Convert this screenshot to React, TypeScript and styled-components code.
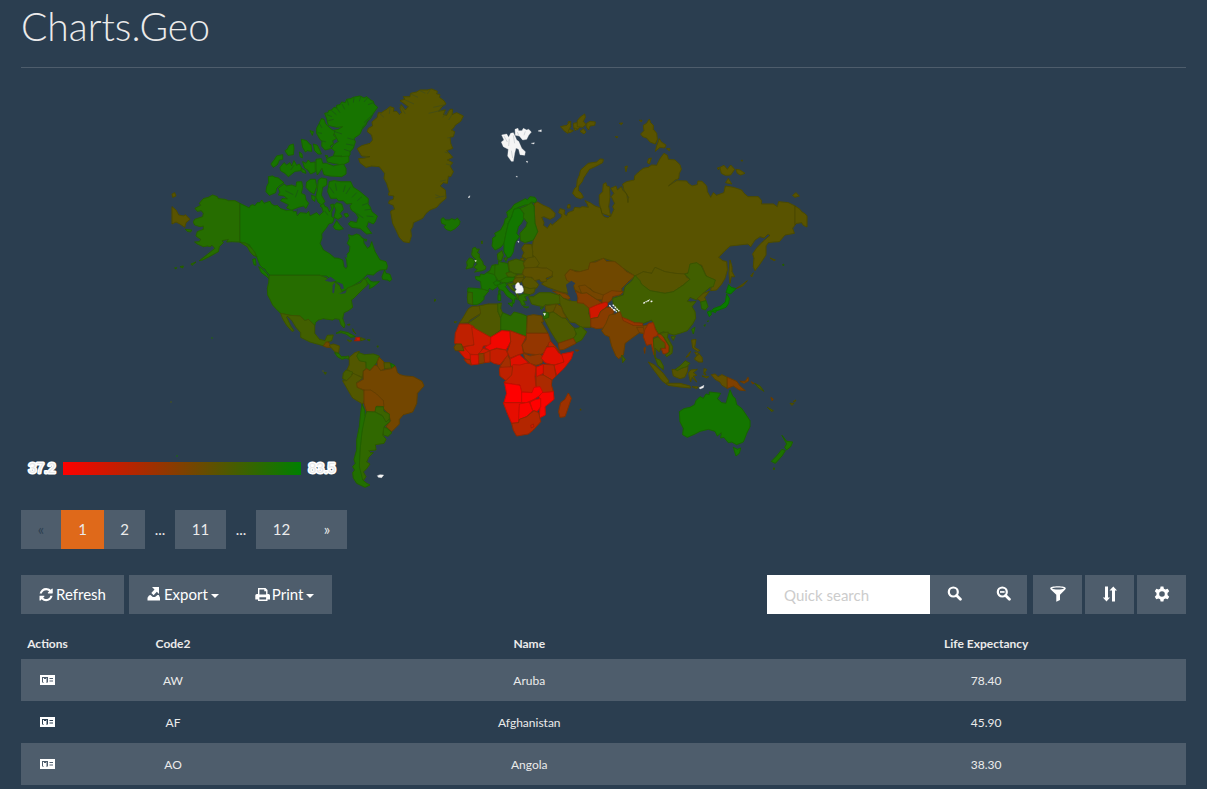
import React from "react";
import styled, { createGlobalStyle } from "styled-components";

const GlobalStyle = createGlobalStyle`
  * { box-sizing: border-box; }
  body {
    margin: 0;
    background: #2b3e50;
    color: #ebebeb;
    font-family: Lato, "Open Sans", sans-serif;
    font-size: 15px;
    line-height: 21px;
  }
`;

/* ---------- map data ---------- */

type Shape = [score: number, points: string];
type Region = { x: number; y: number; shapes: Shape[] };

const WHITE = -1;

// Each region has its own origin; points are in thirds of a pixel from it.
const regions: Region[] = [
  {
    x: 160,
    y: 80,
    shapes: [
      [0.91, "239,370 252,376 268,384 272,376 280,374 284,378 292,368 300,368 305,360 312,370 330,364 334,372 345,378 352,376 362,386 380,392 398,390 400,396 408,394 412,408 420,398 440,400 446,394 450,408 470,398 478,406 490,396 486,382 480,378 490,370 495,380 502,382 508,396 515,386 512,374 520,372 520,384 515,396 515,410 522,415 518,428 506,432 500,442 485,462 486,474 480,490 490,510 510,522 524,534 535,535 548,540 552,560 558,566 562,560 560,540 555,530 568,515 570,500 562,490 568,476 566,464 576,468 590,462 600,466 606,474 610,475 612,490 622,505 630,500 635,485 640,500 645,515 655,532 660,540 678,545 682,558 680,568 660,570 650,576 640,585 622,583 605,600 590,610 565,625 545,635 540,610 515,600 500,588 478,586 330,586 320,575 314,566 308,564 300,555 290,530 275,505 268,494 258,490 239,486"],
      [0.91, "666,590 674,570 678,580 690,583 695,598 690,604 682,600 668,598"],
      [0.91, "614,600 622,592 632,604 640,606 658,605 640,620 628,626 630,616"],
      [0.91, "494,100 504,98 506,92 515,90 522,82 530,84 530,76 540,74 545,66 556,68 560,58 572,56 580,52 600,48 612,54 620,50 632,60 640,64 642,72 653,82 640,100 632,115 622,124 618,135 606,148 600,162 582,175 586,185 580,205 570,215 570,224 562,235 562,240 545,228 520,228 525,215 515,205 520,195 535,185 525,165 518,152 535,148 548,140 530,142 505,136 500,115"],
      [0.91, "484,116 492,118 496,130 505,140 512,146 525,155 520,165 530,175 518,182 520,192 510,198 515,205 495,210 485,198 486,185 478,175 470,160 470,145 478,130"],
      [0.91, "500,236 520,228 545,230 566,228 567,245 548,255 520,250 502,246"],
      [0.91, "468,238 484,236 488,250 500,250 520,258 550,252 558,265 558,282 545,290 510,288 492,284 486,265 472,285 468,265"],
      [0.91, "325,290 338,288 345,292 355,294 372,308 360,316 350,325 347,338 328,346 318,335 320,320 326,308"],
      [0.91, "355,325 372,312 380,318 395,315 408,320 410,306 425,305 428,320 424,340 435,345 438,360 446,370 438,385 430,378 415,382 395,390 380,384 386,374 362,362 366,356 382,356 372,348 355,345 360,336"],
      [0.91, "360,262 372,248 380,255 390,248 395,258 402,242 410,256 418,252 424,262 422,272 405,274 385,290 375,280 362,272"],
      [0.91, "333,252 344,238 350,228 368,224 368,238 358,240 352,254 340,262"],
      [0.91, "382,208 388,196 400,192 402,205 400,224 384,226 375,212"],
      [0.91, "424,178 440,182 448,192 453,194 455,214 442,212 436,216 428,202"],
      [0.91, "460,192 472,196 480,212 484,222 474,222 464,212"],
      [0.91, "450,152 460,155 457,166"],
      [0.91, "418,216 426,222 427,234 420,230"],
      [0.91, "428,245 438,250 445,240 452,248 465,246 466,275 452,282 444,270 434,264"],
      [0.91, "424,264 436,272 438,280 426,276"],
      [0.91, "440,306 452,298 466,298 470,320 462,342 450,335 438,322"],
      [0.91, "475,300 484,294 500,297 500,315 488,322 484,345 495,365 484,374 474,366 468,350 472,330"],
      [0.91, "455,345 466,350 464,364 456,358"],
      [0.91, "496,226 504,228 500,234"],
      [0.91, "508,305 522,302 540,305 572,305 580,322 600,335 625,356 624,372 630,380 636,396 652,408 646,424 640,432 625,425 620,440 635,460 620,462 600,445 575,442 565,432 572,424 590,428 595,412 588,400 574,390 570,378 576,370 560,372 550,362 535,362 530,355 512,355 503,335"],
      [0.91, "520,440 530,422 540,436 550,446 538,450 526,448"],
      [0.91, "530,368 545,372 550,388 540,400 546,410 534,418 522,412 528,390 522,376"],
      [0.91, "552,402 562,400 566,408 558,412"],
      [0.91, "612,478 620,478 618,484"],
      [0.91, "278,538 286,536 288,556 282,554"],
      [0.91, "296,560 306,566 322,582 328,598 318,588 304,578"],
      [0.85, "239,370 225,362 205,362 195,358 175,356 172,350 158,345 145,352 130,356 118,370 122,376 105,385 112,394 124,392 130,400 128,410 104,418 100,426 104,435 120,440 130,438 130,448 112,455 108,468 122,478 118,485 104,486 112,492 130,500 142,498 152,500 155,495 165,505 140,525 118,542 128,540 148,530 175,515 178,500 190,488 186,482 205,478 200,486 215,485 239,486"],
      [0.85, "239,486 258,490 275,505 284,516 290,530 280,526 270,515 262,500"],
      [0.85, "93,552 108,546 96,556"],
      [0.85, "76,448 95,450 92,456 82,454"],
      [0.85, "60,560 70,558 68,564"],
      [0.85, "44,564 50,563 48,567"],
      [0.65, "36,380 48,390 56,405 72,408 76,404 90,418 78,428 74,442 60,432 48,426 36,432"],
      [0.65, "36,342 44,338 48,348 38,352"],
    ],
  },
  {
    x: 340,
    y: 80,
    shapes: [
      [0.66, "52,206 65,197 90,190 98,180 95,165 82,155 85,145 98,138 96,126 112,112 115,98 124,98 140,88 150,80 162,84 160,94 170,94 178,104 185,98 180,84 184,74 196,90 205,80 186,66 180,62 195,58 190,50 210,50 212,40 230,36 240,30 262,30 275,27 292,34 290,42 300,44 298,52 312,62 318,72 306,80 296,94 316,90 310,104 320,106 330,88 338,88 336,104 350,98 370,108 362,124 346,135 340,145 334,150 344,155 340,170 330,172 332,190 338,205 320,212 328,220 338,232 322,240 338,248 330,258 340,275 332,290 325,288 322,310 310,308 300,318 316,330 318,355 300,370 290,382 270,390 258,400 248,415 220,428 218,440 212,450 214,468 208,488 190,485 178,472 168,450 158,430 152,395 154,392 164,388 160,376 146,370 148,362 160,358 162,348 145,345 148,335 140,310 132,295 134,280 118,260 95,258 78,262 60,248 56,236 75,234 90,230 65,228 60,220"],
      [WHITE, "485,165 500,162 506,172 512,160 520,158 526,170 530,180 536,184 545,205 556,215 554,226 540,224 536,208 528,204 524,220 520,244 514,244 503,228 505,208 490,200 484,186 492,180"],
      [WHITE, "525,148 534,145 536,152 546,152 550,145 560,150 566,148 574,156 566,166 560,178 548,180 538,168 526,166"],
      [WHITE, "594,153 604,149 604,155"],
      [WHITE, "574,190 583,188 582,192"],
      [WHITE, "558,244 563,244 562,248"],
      [WHITE, "528,289 532,289 531,292"],
      [WHITE, "384,352 390,347 388,353"],
      [0.9, "303,418 310,413 316,420 328,420 335,416 345,420 352,414 360,424 358,434 345,446 332,453 318,448 312,440 318,435 305,430"],
      [0.65, "663,140 680,138 688,148 700,152 690,158 674,152"],
      [0.65, "684,126 690,124 692,134 686,136"],
      [0.65, "700,130 712,128 720,140 712,150 702,146"],
    ],
  },
  {
    x: 540,
    y: 80,
    shapes: [
      [0.65, "-17,370 -8,366 10,376 30,385 45,400 44,410 30,418 12,410 5,412 12,428 10,436 22,445 32,430 36,436 50,424 64,412 66,404 56,398 60,386 74,390 72,402 80,408 84,398 100,392 104,382 120,384 126,380 145,382 142,372 135,362 150,368 165,378 182,384 186,402 192,410 204,414 210,408 186,400 178,370 178,345 188,335 190,312 198,308 200,318 208,320 210,350 206,380 212,410 222,388 218,380 224,370 214,350 222,340 212,325 228,318 232,330 244,320 248,330 260,342 264,368 266,352 252,330 248,312 260,305 283,300 284,288 296,276 310,265 325,262 335,255 350,256 360,236 372,220 382,226 385,238 405,240 420,254 424,268 418,280 416,296 405,300 385,318 410,302 440,303 445,310 456,318 472,314 474,303 486,304 500,318 502,335 512,352 520,338 530,346 552,338 556,318 580,322 605,330 612,340 624,350 655,350 665,362 664,372 700,372 712,380 716,365 745,368 765,378 765,435 758,445 763,460 735,465 718,485 700,486 685,488 678,498 678,525 668,540 658,555 645,572 640,560 642,535 638,522 650,504 668,485 690,466 684,462 672,474 660,470 645,480 632,500 624,492 570,498 555,512 536,532 548,542 560,545 562,570 555,595 545,612 530,630 512,632 516,612 526,600 500,590 485,555 460,552 450,575 435,582 405,580 375,575 345,562 335,580 310,575 285,588 250,565 225,545 190,535 150,548 145,568 120,575 90,568 75,585 80,600 94,608 80,616 85,640 60,635 20,620 5,612 20,600 38,590 36,578 15,570 -5,562 -12,550 -15,535 -25,520 -22,495 -20,480 -7,455 -15,430 -17,395"],
      [0.65, "765,378 780,388 785,395 796,402 801,408 801,441 790,436 785,428 770,430 765,435"],
      [0.65, "570,540 576,560 576,575 584,590 574,590 570,610 567,580"],
      [0.65, "98,340 104,325 110,320 112,300 118,286 122,270 138,256 145,250 170,246 180,237 190,238 188,248 165,260 148,268 140,280 132,292 126,306 116,318 115,332 124,340 130,352 122,356 108,352"],
      [0.65, "310,136 320,130 328,117 332,128 340,136 340,148 350,160 352,178 346,192 330,186 320,174 308,170 302,162 312,152"],
      [0.65, "346,214 350,198 358,176 364,186 378,195 374,204 360,202"],
      [0.65, "380,206 390,206 388,212"],
      [0.65, "298,121 306,121 304,125"],
      [0.65, "62,140 80,136 92,124 92,140 86,150 84,160 74,154"],
      [0.65, "112,122 120,112 134,102 136,112 130,124 138,134 128,142 112,140"],
      [0.65, "140,130 150,124 166,126 164,136 150,138 146,150 140,142"],
      [0.65, "102,144 112,146 106,152"],
      [0.65, "120,154 130,146 138,156 132,162"],
      [0.65, "238,130 248,129 244,134"],
      [0.65, "226,170 233,170 231,174"],
      [0.65, "255,260 262,258 258,275"],
      [0.65, "84,374 90,374 90,384 82,384"],
      [0.65, "326,236 334,234 328,252 322,248"],
      [0.65, "540,262 552,256 562,268 572,255 584,268 572,285 556,286 544,280"],
      [0.65, "588,268 600,270 615,280 602,285 592,280"],
      [0.65, "557,308 565,295 575,312"],
      [0.65, "532,264 538,262 536,270"],
      [0.65, "758,346 768,338 778,348 764,352"],
      [0.65, "603,241 608,241 606,244"],
      [0.65, "690,534 706,540 702,542"],
      [0.65, "588,626 606,614 622,602 608,618"],
      [0.65, "632,588 640,578 636,590"],
      [0.56, "75,585 90,568 108,575 120,575 145,568 150,548 168,546 190,535 200,544 225,545 250,565 258,574 285,588 265,605 245,625 246,634 210,638 185,652 176,648 150,625 125,618 122,640 105,630 100,614 80,600"],
      [0.66, "285,588 310,575 335,580 345,562 375,575 405,580 435,582 440,592 450,598 430,615 400,635 375,640 330,632 300,612"],
      [0.8, "728,554 731,553 731,557"],
    ],
  },
  {
    x: 440,
    y: 180,
    shapes: [
      [0.65, "242,236 250,234 254,242 244,242"],
      [0.9, "158,185 158,174 168,168 164,160 182,150 192,132 196,116 204,112 200,96 214,86 222,74 245,62 256,56 262,60 270,50 285,52 290,60 286,68 275,66 265,74 255,75 235,82 222,88 215,110 205,130 198,160 192,190 182,202 165,210 156,198"],
      [0.93, "222,88 238,84 250,98 252,114 244,130 235,140 230,160 238,170 226,186 222,200 220,215 212,230 203,234 192,215 192,190 198,160 205,130 215,110"],
      [0.85, "240,85 258,78 275,68 283,80 283,95 285,130 293,155 280,180 255,188 242,182 240,160 258,140 262,128 250,112 252,100"],
      [0.84, "172,222 186,212 190,225 184,242 174,240"],
      [0.84, "192,234 202,234 198,244"],
      [0.86, "98,205 106,202 110,208 118,207 112,218 118,222 118,232 128,245 130,254 138,260 136,268 126,272 104,276 112,268 102,262 112,252 105,244 108,238 100,232 95,224"],
      [0.86, "80,246 88,234 98,236 104,244 98,262 78,267 82,256"],
      [0.8, "124,184 127,183 126,192"],
      [0.9, "106,290 120,290 122,282 132,284 145,275 155,274 168,290 170,305 172,320 158,330 148,325 144,332 130,330 124,325 122,305 108,298"],
      [0.89, "84,324 105,325 130,328 146,333 132,350 132,358 120,370 110,374 98,374 97,338 83,336"],
      [0.8, "84,336 97,338 98,374 84,370 82,352"],
      [0.87, "142,278 150,272 156,256 168,254 166,285 158,282"],
      [0.86, "165,255 175,254 176,244 188,248 203,250 208,275 198,280 205,292 200,300 175,303 164,285"],
      [0.75, "205,245 228,237 250,244 255,270 245,282 222,280 208,272"],
      [0.76, "198,280 212,276 232,285 218,293 205,291"],
      [0.87, "178,303 198,292 225,292 220,303 200,309 185,307"],
      [0.91, "160,308 170,302 182,306 178,314 165,316"],
      [0.9, "172,316 182,312 195,308 200,316 196,320 208,336 225,348 232,358 224,356 222,370 216,370 218,360 200,347 190,332 178,328"],
      [0.9, "204,370 218,369 216,380"],
      [0.9, "174,344 182,344 182,362 174,361"],
      [0.9, "176,332 180,332 180,342 176,341"],
      [0.68, "232,285 250,284 252,292 236,294 225,292"],
      [0.66, "220,303 226,294 252,292 246,304 230,312 220,309"],
      [0.76, "202,312 218,309 228,312 214,316 222,328 232,338 214,328"],
      [0.66, "246,304 258,290 272,292 284,300 296,314 290,324 270,326 252,320"],
      [0.68, "252,320 270,326 286,324 282,338 268,344 252,340"],
      [0.84, "236,348 250,342 270,344 254,350 260,362 250,362 256,374 246,376 240,362 234,358"],
      [0.84, "250,380 266,381 260,384"],
      [0.77, "228,338 234,342 236,356 230,350"],
      [WHITE, "227,314 232,308 237,308 240,316 246,317 250,326 250,334 244,339 228,340 226,334 230,328 226,324"],
      [0.66, "245,205 254,192 275,194 278,214 278,235 262,238 246,230 252,218"],
      [0.65, "250,250 262,234 285,230 298,250 290,262 255,264"],
      [0.63, "250,270 255,264 290,262 306,264 320,264 338,275 336,288 318,294 320,304 304,306 298,298 284,302 276,292 255,290 248,282"],
      [WHITE, "233,184 237,184 236,188"],
      [WHITE, "104,242 109,241 108,245"],
    ],
  },
  {
    x: 430,
    y: 230,
    shapes: [
      [0.74, "296,200 310,200 328,188 360,188 385,195 398,205 396,220 380,222 345,224 340,230 320,226 305,222"],
      [0.53, "368,183 384,186 408,192 424,204 414,208 398,204 390,196"],
      [0.69, "388,192 400,205 418,212 440,212 460,216 478,230 476,250 484,270 482,292 455,292 435,278 420,276 400,245 390,220"],
      [0.48, "436,184 452,190 470,188 500,208 516,218 500,225 478,235 460,220 442,218 444,204"],
      [0.54, "446,168 465,165 490,185 520,195 530,195 515,210 500,208 470,188 455,190"],
      [0.5, "515,215 520,195 545,182 580,185 572,194 548,200 545,210 528,222"],
      [0.18, "478,235 500,225 515,220 530,216 533,225 528,232 512,244 504,262 482,266"],
      [0.47, "482,266 504,262 512,244 530,232 545,232 552,246 540,265 530,280 536,292 500,296 482,290"],
      [0.65, "345,228 380,222 370,245 350,250"],
      [0.62, "370,245 380,222 394,230 400,248 410,264 395,264"],
      [0.7, "342,266 356,262 360,248 370,246 396,264 408,266 420,282 430,292 440,298 436,318 430,324 385,340 375,325 360,300"],
      [0.76, "432,296 446,294 452,288 470,306 455,330 435,340 430,325 440,312"],
      [0.48, "385,340 430,325 438,340 402,358 388,360"],
      [0.84, "340,246 355,248 356,262 342,267"],
      [WHITE, "340,250 347,250 344,257"],
      [0.45, "436,360 446,361 440,364"],
      [0.83, "330,234 340,232 334,238"],
      [0.69, "148,228 175,222 204,222 204,245 212,265 212,300 182,322 165,322 125,290 115,280 150,255"],
      [0.66, "100,262 115,236 125,230 148,228 152,250 120,270 115,278 88,280"],
      [0.76, "203,222 214,219 212,235 218,250 212,264 204,245"],
      [0.83, "218,248 242,258 252,246 275,252 290,258 290,320 240,302 212,300 212,264"],
      [0.58, "292,258 310,254 336,258 340,276 334,276 354,310 290,310"],
      [0.25, "88,282 116,282 132,290 132,345 100,350 74,340 76,310"],
      [0.2, "125,290 182,322 180,345 160,348 150,375 112,372 104,350 132,345"],
      [0.05, "182,322 215,302 240,304 242,335 228,360 200,354 180,362 164,352 182,342"],
      [0.28, "240,302 288,320 276,345 280,370 265,374 240,385 232,366 242,335"],
      [0.42, "290,310 354,310 362,334 350,350 342,368 330,375 300,372 282,368 276,345 288,330"],
      [0.42, "280,370 300,378 330,372 342,382 336,400 318,406 300,400 284,384"],
      [0.12, "350,352 372,348 385,368 395,375 412,378 400,398 370,405 345,398 334,385"],
      [0.3, "356,338 362,334 378,352 390,368 372,350 354,350"],
      [0.12, "395,372 430,365 424,386 402,415 380,436 372,406 402,396"],
      [0.26, "340,403 372,405 378,438 366,450 340,435"],
      [0.33, "318,435 340,435 366,450 364,465 370,485 340,488 318,470"],
      [0.12, "318,412 340,403 340,430 320,440"],
      [0.22, "242,408 250,402 280,400 300,400 318,410 315,440 318,470 312,488 275,486 270,465 245,462 222,458 228,450 240,434"],
      [0.12, "238,388 268,374 295,398 270,405 250,404 242,410"],
      [0.36, "210,410 232,375 240,388 242,412 222,414"],
      [0.23, "178,362 200,356 228,360 234,374 210,404 192,400 178,392"],
      [0.26, "208,420 210,412 248,410 245,435 228,452 210,438"],
      [0.2, "142,376 160,355 180,362 172,372 150,378"],
      [0.47, "145,372 162,370 164,398 146,402"],
      [0.28, "162,370 180,362 180,396 164,398"],
      [0.15, "120,374 145,374 146,402 122,405"],
      [0.17, "86,362 102,352 120,372 122,392 106,386"],
      [0.32, "102,388 120,388 124,404 112,400"],
      [0.58, "72,352 78,342 94,342 102,362 76,362"],
      [0, "224,460 245,462 270,466 275,486 275,518 222,518 230,490"],
      [0, "275,486 306,488 312,472 330,470 340,490 312,508 290,518 275,518"],
      [0.03, "336,488 370,485 372,508 345,530 346,555 328,564 330,530 332,510 326,500"],
      [0, "300,516 318,508 332,506 332,530 322,544 308,542"],
      [0.1, "220,518 285,518 268,530 266,578 245,580 232,550"],
      [0.02, "268,522 298,516 308,542 290,560 266,570"],
      [0.3, "245,580 266,578 268,568 290,560 312,542 326,548 332,575 310,600 295,612 260,618 250,600"],
      [0.2, "302,586 310,582 312,590 304,594"],
      [0.38, "386,545 392,518 405,508 415,489 424,505 405,560 390,562"],
      [0.82, "14,208 18,210 15,213"],
      [0.7, "72,276 80,275 76,279"],
      [0.64, "450,538 453,537 452,541"],
    ],
  },
  {
    x: 600,
    y: 240,
    shapes: [
      [0.745, "105,106 120,122 124,132 150,152 195,160 220,155 250,135 270,118 254,102 264,100 270,72 290,68 304,78 318,108 346,120 340,140 330,142 300,168 290,180 270,172 262,184 272,186 288,184 276,200 285,215 287,235 278,252 262,272 245,278 222,285 205,280 190,275 175,282 165,262 155,240 130,250 100,248 68,235 50,212 40,192 38,175 70,165 75,140 96,122"],
      [0.66, "292,176 310,160 328,154 314,172 318,182 304,186"],
      [0.83, "302,186 318,182 324,200 316,210 305,206"],
      [0.97, "386,134 394,142 408,146 392,162 378,158"],
      [0.97, "380,162 388,175 386,190 378,202 362,208 345,214 332,216 340,206 362,198 376,186"],
      [0.97, "322,216 332,212 334,224 328,230"],
      [0.97, "338,214 350,210 346,218"],
      [0.85, "275,268 285,262 280,282"],
      [0.74, "213,290 226,288 220,301"],
      [0.52, "28,225 46,222 60,215 70,240 100,256 118,248 130,258 148,254 138,266 130,280 118,278 95,295 75,310 70,345 56,356 48,348 35,318 28,290 15,285 5,272 18,250"],
      [0.41, "66,232 82,238 104,248 128,250 128,257 100,256 70,242"],
      [0.5, "110,262 130,262 134,280 118,278"],
      [0.74, "65,345 76,358 68,368"],
      [0.46, "132,325 136,322 134,340"],
      [0.38, "134,270 146,250 160,248 166,268 176,285 160,292 160,304 166,345 162,345 154,312 140,316 130,290"],
      [0.7, "160,296 175,290 188,302 198,308 194,326 182,325 178,336 166,325 166,350 174,362 164,352"],
      [0.4, "172,284 186,282 195,300 208,320 206,338 190,342 184,326 197,325 195,308 184,300"],
      [0.73, "180,280 205,276 202,292 218,320 216,340 200,350 196,345 208,336 208,318 192,292"],
      [0.74, "166,355 180,360 190,378 190,389 174,376"],
      [0.66, "145,366 162,374 188,398 206,422 202,434 186,422 160,388"],
      [0.66, "198,430 240,430 270,438 272,444 240,441 204,436"],
      [0.66, "276,440 295,441 290,446"],
      [0.66, "216,388 230,390 248,384 264,378 262,395 254,412 240,416 220,408"],
      [0.74, "226,388 240,378 256,362 270,370 260,380 246,384 232,392"],
      [0.66, "266,398 272,390 292,388 280,398 290,406 280,408 290,426 276,412 272,426 268,412"],
      [0.66, "312,386 320,388 314,398 318,404 312,402"],
      [0.66, "306,408 326,410 320,414"],
      [0.65, "275,300 288,298 284,322 300,332 292,334 278,324"],
      [0.65, "286,352 298,342 306,352 308,366 296,366 284,358"],
      [0.65, "258,352 272,334 266,348"],
      [0.65, "284,336 296,340 290,346"],
      [0.62, "334,404 346,402 354,410 366,404 382,412 382,445 366,436 360,426 345,418"],
      [0.5, "382,412 410,424 420,438 436,452 418,450 400,438 382,445"],
      [0.5, "420,424 436,424 444,412 446,422 432,430"],
      [0.5, "454,425 462,430 458,432"],
      [0.73, "464,430 480,438 492,454 476,444"],
      [0.7, "502,502 520,512 514,514"],
      [0.5, "513,472 520,478 516,482"],
      [0.66, "570,490 582,490 576,496"],
      [0.66, "580,484 588,480 584,486"],
      [WHITE, "298,443 312,436 310,443 300,447"],
      [0.92, "238,515 252,506 270,502 284,494 288,482 300,470 310,475 318,462 328,464 328,456 345,458 362,460 352,476 365,488 378,490 384,470 390,450 398,468 406,476 410,494 425,505 438,524 450,542 450,560 440,580 430,606 410,614 395,606 385,608 372,592 362,594 364,578 352,588 345,574 325,568 300,574 285,582 262,592 248,584 250,565 240,545"],
      [0.92, "400,622 412,628 422,624 418,640 408,648"],
      [0.89, "546,586 560,604 578,606 572,620 560,630 554,622 560,612"],
      [0.89, "546,628 556,632 546,648 526,670 514,664 530,648"],
      [0.8, "520,684 524,684 522,690"],
      [0.85, "548,74 551,73 550,77"],
      [0.85, "312,256 316,254 314,259"],
      [0.85, "322,244 325,242 324,246"],
    ],
  },
  {
    x: 240,
    y: 250,
    shapes: [
      [0.85, "88,76 240,76 260,84 274,92 288,98 300,108 306,126 318,122 322,114 345,105 362,98 372,86 380,92 382,105 368,118 356,130 340,146 334,150 336,162 338,172 325,182 312,188 308,205 315,225 312,234 303,224 298,208 285,206 278,210 250,206 235,210 226,218 225,226 215,220 205,208 195,212 180,198 150,196 122,190 108,176 98,165 90,148 83,135 82,115 86,98"],
      [0.74, "122,190 150,196 180,198 195,212 205,208 224,226 224,250 238,268 255,272 262,256 280,255 275,272 262,276 252,288 235,283 210,276 182,262 182,248 168,232 156,212 142,198 140,202 152,228 162,242 156,244 140,226 128,206"],
      [0.57, "250,288 258,276 266,276 272,292 260,292"],
      [0.67, "268,286 280,282 298,288 296,308 286,306 276,296"],
      [0.86, "284,308 296,310 304,320 316,320 326,318 326,328 318,324 306,328 292,320"],
      [0.86, "288,250 302,243 324,248 346,260 332,262 318,252 304,248"],
      [0.2, "346,264 360,262 360,272 342,272 350,268"],
      [0.72, "362,263 376,268 362,272"],
      [0.82, "382,269 390,269 388,273"],
      [0.74, "322,270 335,272 330,276"],
      [0.8, "322,224 330,222 328,226"],
      [0.8, "338,236 342,244 348,252 340,244"],
      [0.8, "411,288 415,288 413,292"],
      [0.75, "252,367 259,368 256,373"],
      [0.68, "328,322 345,308 358,304 352,318 358,332 378,336 380,355 370,362 368,382 342,372 322,358 328,345"],
      [0.78, "356,308 374,314 400,312 418,318 412,335 402,348 390,362 378,355 378,336 358,332 350,318"],
      [0.56, "418,322 432,336 434,356 422,362 412,348 412,335"],
      [0.68, "432,338 450,338 454,354 434,356"],
      [0.9, "452,340 464,346 456,356"],
      [0.72, "310,370 318,360 338,366 334,378 320,392 308,386"],
      [0.68, "308,392 320,392 334,378 340,370 368,384 350,398 352,412 372,422 374,448 368,462 338,444 326,424"],
      [0.55, "370,364 380,356 390,362 404,346 412,348 422,362 454,356 466,348 472,368 480,374 495,378 520,380 546,394 552,408 532,430 530,460 518,486 490,494 478,508 478,522 455,545 438,530 452,512 445,490 430,475 430,452 400,430 372,420 352,412 350,400 370,388"],
      [0.53, "372,420 392,420 410,432 430,452 432,470 410,468 405,486 380,485 372,460"],
      [0.77, "408,470 430,470 432,484 448,492 448,508 438,516 424,504 426,496 405,486"],
      [0.82, "430,532 440,534 456,548 444,559 430,555"],
      [0.81, "380,485 405,486 428,498 438,516 448,508 450,514 432,530 428,555 438,568 432,580 406,584 408,600 386,602 392,608 400,608 386,622 380,636 390,642 380,656 370,666 378,680 370,692 355,670 358,630 362,580 368,520"],
      [0.87, "366,462 374,480 375,500 366,545 360,600 358,650 368,690 380,700 390,705 375,712 350,700 340,684 338,668 344,660 338,650 346,640 342,628 350,600 350,570 358,530 362,490"],
      [WHITE, "412,677 420,674 431,675 425,683 415,682"],
      [0.8, "582,152 586,150 585,154"],
    ],
  },
];

// Inland water, drawn over the land in the page colour.
const lakes = [
  "255,92 262,86 272,80 288,92 272,96",
  "278,106 284,98 286,102 282,130 277,128",
  "290,96 308,102 312,116 304,118 298,104",
  "296,132 320,120 316,130",
  "312,12 322,14 320,24 312,20",
];

const inlets =
  "M515,92l14,12M530,84l10,14M546,72l8,16M562,60l4,16M582,54l-2,14M602,50l-4,14M622,54l-10,12M640,68l-16,6M500,104l16,6M505,122l16,-4M636,106l-24,22M628,120l-22,24M522,154l24,8M584,180l-22,-6M580,196l-22,-4M570,214l-18,-6M376,332l24,12M414,330l-8,22M402,256l-10,14M508,320l14,20M526,310l4,22M556,316l-6,20M572,320l-14,22M590,338l-14,14M606,350l-14,12M622,370l-16,6M632,388l-18,2M640,410l-20,-2M590,400l20,14M494,392l10,14M410,402l2,-14M478,130l8,14M474,158l12,2M484,182l14,4";

const fillFor = (score: number) =>
  score === WHITE
    ? "#f5f5f5"
    : `rgb(${Math.round(255 * (1 - score))},${Math.round(128 * score)},0)`;

const MapSvg = styled.svg`
  display: block;
  width: 800px;
  max-width: 100%;
  font-family: "Liberation Sans", Arial, sans-serif;
  font-size: 14px;
`;

const WorldMap = () => (
  <MapSvg viewBox="21 80 800 420" role="img" aria-label="Life expectancy by country">
    <defs>
      <linearGradient id="scale">
        <stop offset="0" stopColor="#ff0000" />
        <stop offset="1" stopColor="#008000" />
      </linearGradient>
    </defs>
    {regions.map((region, i) => (
      <g key={i} transform={`translate(${region.x} ${region.y}) scale(0.33333)`}>
        {region.shapes.map(([score, points], n) => (
          <g key={n} strokeLinejoin="round">
            <polygon
              points={points}
              fill={fillFor(score)}
              stroke={fillFor(score)}
              strokeWidth={score === WHITE ? 1 : 3}
            />
            {score !== WHITE && (
              <polygon points={points} fill="none" stroke="#203000" strokeOpacity="0.24" strokeWidth="3" />
            )}
          </g>
        ))}
      </g>
    ))}
    <g transform="translate(160 80) scale(0.33333)">
      <path d={inlets} fill="none" stroke="#1d4a1c" strokeWidth="2.4" opacity="0.7" />
    </g>
    <g transform="translate(340 80) scale(0.33333)">
      <path
        d="M118,100l14,12M150,84l-2,18M178,72l18,30M196,60l26,12M212,42l22,10M240,32l16,8M270,30l-8,12M316,88l-50,12M316,74l-36,8M324,92l-16,20M336,104l-10,16M332,172l-10,2M328,220l-14,-4M334,256l-16,-4M318,300l-18,4M300,350l-14,-6M314,348l-28,6"
        fill="none"
        stroke="#3c4a20"
        strokeWidth="2.4"
        opacity="0.8"
      />
      <path
        d="M492,168l10,18M508,176l-2,22M520,166l4,24M514,212l4,22M532,156l4,10M556,154l-4,12"
        fill="none"
        stroke="#2b3e50"
        strokeWidth="1.500"
        opacity="0.35"
      />
    </g>
    <g transform="translate(240 250) scale(0.33333)" fill="#2b3e50">
      {lakes.map((points) => (
        <polygon key={points} points={points} />
      ))}
    </g>
    <g transform="translate(430 230) scale(0.33333)">
      <path
        d="M408,164L424,152L436,160L428,170L434,184L440,192L440,214L424,212L414,190Z"
        fill="#2b3e50"
      />
      <path
        d="M538,226l16,16M548,224l20,20M552,238l8,8M640,220l10,-6M652,214l8,-5M662,216l6,-4"
        stroke="#f0f0f0"
        strokeWidth="4"
        strokeDasharray="6 2"
        fill="none"
      />
    </g>
    <circle cx="171" cy="402" r="0.8" fill="#4d5a10" />
    <circle cx="212" cy="338" r="0.8" fill="#236b00" />
    <circle cx="323" cy="371" r="0.8" fill="#4d5a10" />
    <circle cx="177" cy="456" r="0.8" fill="#187500" />
    <rect x="63" y="462" width="238" height="13" fill="url(#scale)" />
    <g fill="#e8e8e8" stroke="#ffffff" strokeWidth="3" strokeLinejoin="round" textAnchor="middle">
      <text x="42" y="473" paintOrder="stroke">37.2</text>
      <text x="322" y="473" paintOrder="stroke">83.5</text>
    </g>
  </MapSvg>
);

/* ---------- icons ---------- */

const Glyph = styled.svg<{ $w?: number; $h?: number }>`
  width: ${(p) => p.$w ?? 15}px;
  height: ${(p) => p.$h ?? 15}px;
  fill: currentColor;
  flex: none;
`;

const RefreshIcon = () => (
  <Glyph viewBox="-60 -110 1740 1740">
    <path d="M1511 928q0 5-1 7-64 268-268 434.500T764 1536q-146 0-282.500-55T238 1324l-129 129q-19 19-45 19t-45-19-19-45V960q0-26 19-45t45-19h448q26 0 45 19t19 45-19 45l-137 137q71 66 161 102t187 36q134 0 250-65t186-179q11-17 53-117 8-23 30-23h192q13 0 22.500 9.500t9.500 22.500zm25-800v448q0 26-19 45t-45 19h-448q-26 0-45-19t-19-45 19-45l138-138Q969 256 768 256q-134 0-250 65T332 500q-11 17-53 117-8 23-30 23H50q-13 0-22.500-9.500T18 608v-7q65-268 270-434.500T768 0q146 0 284 55.500T1297 212l130-129q19-19 45-19t45 19 19 45z" />
  </Glyph>
);
const ExportIcon = () => (
  <Glyph viewBox="0 0 15 15">
    <path d="M5 0h7v7l-2.200-2.200-3.200 3.400-2.300-2.300 3.200-3.500zM2 8.500l1.500-.5 2.300 2H8l2.500-2h1.300l1.200 2.700V13.500H.5v-2.800z" />
  </Glyph>
);
const PrintIcon = () => (
  <Glyph viewBox="0 0 15 15">
    <path
      fillRule="evenodd"
      d="M3 1h7.500L12.500 3v4H13.500Q15 7 15 8.500V12.500h-2.500V14H3v-1.500H.3V8.500Q.3 7 1.800 7H3zM4.400 2.400V7.600h6.700V4.300H9.300V2.400zM4.400 10.300v2.300h6.700v-2.300z"
    />
  </Glyph>
);
const SearchIcon = ({ minus = false }: { minus?: boolean }) => (
  <Glyph viewBox="0 0 15 15">
    <circle cx="6.300" cy="6" r="4.500" fill="none" stroke="currentColor" strokeWidth="2.200" />
    <path d="M9.600 9.400l3.800 3.800" stroke="currentColor" strokeWidth="2.800" strokeLinecap="round" />
    {minus && <path d="M4 5.100h4.600v1.700H4z" />}
  </Glyph>
);
const FilterIcon = () => (
  <Glyph viewBox="0 0 16 16" $w={16} $h={16}>
    <path
      fillRule="evenodd"
      d="M.2 2.300C.2 1 3.500.300 8 .300s7.800.7 7.800 2c0 .6-.3 1-.8 1.500L10 8.800V14L6.300 15.800v-7L1 3.800C.5 3.300.2 2.900.2 2.300zM2 2.500c1 .7 3.200 1 6 1s5-.3 6-1c-1-.6-3.200-.9-6-.9s-5 .3-6 .9z"
    />
  </Glyph>
);
const SortIcon = () => (
  <Glyph viewBox="0 0 16 16" $w={16} $h={16}>
    <path d="M3 .6h3v10.900h2L4.500 15.400.8 11.500H3zM9.500 4.500h-2L11.300.6 15 4.500h-2v10.900h-3V4.500z" />
  </Glyph>
);
const GearIcon = () => (
  <Glyph viewBox="0 0 16 16" $w={16} $h={16}>
    <path
      fillRule="evenodd"
      d="M6.600.5h2.800l.5 2.200 1.600.9 2.200-.8 1.500 2.500-1.700 1.600v2.200l1.700 1.600-1.500 2.500-2.200-.8-1.600.9-.5 2.200H6.600l-.5-2.200-1.600-.9-2.200.8-1.500-2.500 1.700-1.600V6.900L.8 5.300l1.500-2.500 2.200.8 1.600-.9zM8 5.200a2.800 2.800 0 1 0 0 5.600 2.800 2.800 0 0 0 0-5.600z"
    />
  </Glyph>
);
const CardIcon = () => (
  <Glyph viewBox="0 0 15 10" $w={15} $h={10}>
    <path
      fillRule="evenodd"
      d="M0 0h15v10H0zM2 2v5.500h2V7H3V3h1v1h2V3h.500v4H6v.5h2V2zM9.500 3v1H13V3zM9.500 5.500v1H13v-1z"
    />
  </Glyph>
);

/* ---------- page ---------- */

const Page = styled.main`
  padding: 0 21px 4px;
`;
const Title = styled.h1`
  margin: 0 0 12px;
  padding: 3px 0 18px;
  border-bottom: 1px solid #4e5d6c;
  font-size: 39px;
  font-weight: 300;
  line-height: 46px;
`;
const Pagination = styled.nav`
  display: flex;
  margin: 10px 0 26px;
`;
const PageButton = styled.button<{ $active?: boolean; $width: number }>`
  width: ${(p) => p.$width}px;
  height: 39px;
  padding: 0;
  border: 0;
  background: ${(p) => (p.$active ? "#df691a" : "#4e5d6c")};
  color: #ebebeb;
  font: inherit;
  &:disabled {
    color: #2b3e50;
  }
`;
const Ellipsis = styled.span`
  width: 30px;
  line-height: 39px;
  text-align: center;
`;
const Toolbar = styled.div`
  display: flex;
  justify-content: space-between;
  margin-bottom: 15px;
`;
const ToolGroup = styled.div<{ $gap: number }>`
  display: flex;
  gap: ${(p) => p.$gap}px;
`;
const Joined = styled.div`
  display: flex;
`;
const ToolButton = styled.button`
  display: flex;
  align-items: center;
  gap: 2px;
  height: 39px;
  padding: 0 18px;
  border: 0;
  background: #4e5d6c;
  color: #fff;
  font: inherit;
`;
const IconButton = styled(ToolButton)<{ $width?: number }>`
  justify-content: center;
  width: ${(p) => p.$width ?? 49}px;
  padding: 0 0 2px;
`;
const Caret = styled.span`
  border: 4px solid transparent;
  border-top-color: currentColor;
  border-bottom: 0;
  margin: 2px 0 0 1px;
`;
const SearchForm = styled.form`
  display: flex;
  margin-right: 3px;
`;
const SearchInput = styled.input`
  width: 163px;
  height: 39px;
  padding: 1px 17px 0;
  border: 0;
  border-radius: 0;
  background: #fff;
  color: #2b3e50;
  font: inherit;
  &::placeholder {
    color: #ccc;
    opacity: 1;
  }
`;
const Table = styled.table`
  width: 100%;
  table-layout: fixed;
  border-collapse: collapse;
  font-size: 12px;
  line-height: 18px;
  text-align: center;
  th {
    height: 30px;
    padding: 0;
    font-weight: 700;
  }
  td {
    height: 42px;
    padding: 2px 0 0;
  }
  tbody tr:nth-child(odd) {
    background: #4e5d6c;
  }
`;
const Col = styled.col<{ $width?: string }>`
  width: ${(p) => p.$width ?? "auto"};
`;
const RowAction = styled.button`
  display: flex;
  margin: 0 auto;
  padding: 0 0 3px;
  border: 0;
  background: none;
  color: #fff;
`;

const rows = [
  ["AW", "Aruba", "78.40"],
  ["AF", "Afghanistan", "45.90"],
  ["AO", "Angola", "38.30"],
];

export default function App() {
  return (
    <>
      <GlobalStyle />
      <Page>
        <Title>Charts.Geo</Title>
        <WorldMap />
        <Pagination aria-label="Pages">
          <PageButton $width={40} disabled>«</PageButton>
          <PageButton $width={43} $active>1</PageButton>
          <PageButton $width={41}>2</PageButton>
          <Ellipsis>...</Ellipsis>
          <PageButton $width={51}>11</PageButton>
          <Ellipsis>...</Ellipsis>
          <PageButton $width={51}>12</PageButton>
          <PageButton $width={40}>»</PageButton>
        </Pagination>
        <Toolbar>
          <ToolGroup $gap={5}>
            <ToolButton><RefreshIcon />Refresh</ToolButton>
            <Joined>
              <ToolButton><ExportIcon />Export<Caret /></ToolButton>
              <ToolButton><PrintIcon />Print<Caret /></ToolButton>
            </Joined>
          </ToolGroup>
          <ToolGroup $gap={3}>
            <SearchForm onSubmit={(e) => e.preventDefault()}>
              <SearchInput type="text" placeholder="Quick search" aria-label="Quick search" />
              <IconButton type="submit" aria-label="Search"><SearchIcon /></IconButton>
              <IconButton type="button" $width={48} aria-label="Reset search"><SearchIcon minus /></IconButton>
            </SearchForm>
            <IconButton aria-label="Filter"><FilterIcon /></IconButton>
            <IconButton aria-label="Sort"><SortIcon /></IconButton>
            <IconButton aria-label="Settings"><GearIcon /></IconButton>
          </ToolGroup>
        </Toolbar>
        <Table>
          <colgroup>
            <Col $width="53px" />
            <Col $width="17%" />
            <Col />
            <Col $width="34.3%" />
          </colgroup>
          <thead>
            <tr>
              <th scope="col">Actions</th>
              <th scope="col">Code2</th>
              <th scope="col">Name</th>
              <th scope="col">Life Expectancy</th>
            </tr>
          </thead>
          <tbody>
            {rows.map(([code, name, life]) => (
              <tr key={code}>
                <td><RowAction aria-label={`View ${name}`}><CardIcon /></RowAction></td>
                <td>{code}</td>
                <td>{name}</td>
                <td>{life}</td>
              </tr>
            ))}
          </tbody>
        </Table>
      </Page>
    </>
  );
}
